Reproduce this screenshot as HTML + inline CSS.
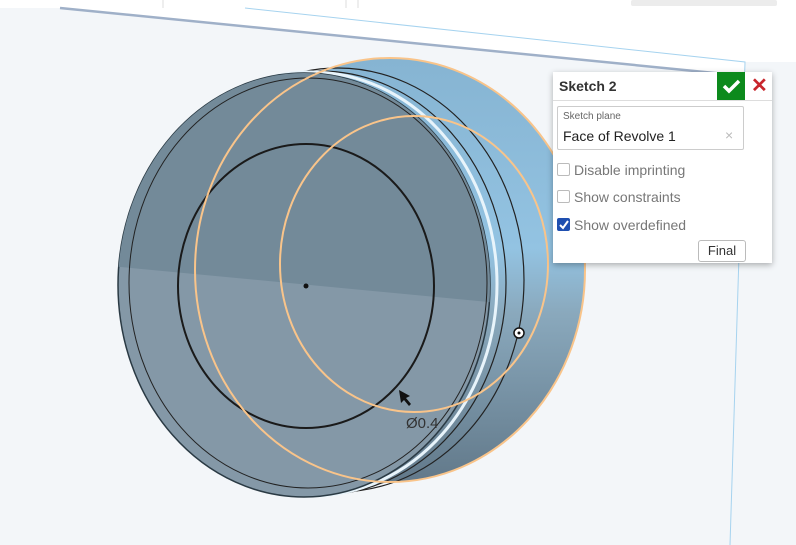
<!DOCTYPE html>
<html><head><style>
body{margin:0;width:796px;height:545px;overflow:hidden;background:#f3f6f9;font-family:"Liberation Sans",sans-serif;position:relative}
svg{position:absolute;left:0;top:0}
.panel{position:absolute;left:553px;top:72px;width:219px;height:191px;background:#fff;box-shadow:0 2px 6px rgba(0,0,0,.3)}
.hd{height:28px;border-bottom:1px solid #ddd;font-weight:bold;font-size:14px;color:#333;line-height:28px;padding-left:6px}
.ok{position:absolute;left:164px;top:0;width:28px;height:28px;background:#0c8a1c}
.x{position:absolute;left:198px;top:0;color:#c8252c;font-size:20px;font-weight:bold;line-height:28px}
.inp{position:absolute;left:4px;top:34px;width:185px;height:42px;border:1px solid #ccc;border-radius:2px}
.inp .l{position:absolute;left:5px;top:4px;font-size:10px;color:#666}
.inp .v{position:absolute;left:5px;top:21px;font-size:14px;color:#222}
.inp .c{position:absolute;left:167px;top:20px;font-size:14px;color:#bbb}
.cb{position:absolute;left:4px;font-size:14px;color:#777}
.cb i{display:inline-block;width:11px;height:11px;border:1px solid #bbb;border-radius:2px;vertical-align:-1px;margin-right:4px}
.fin{position:absolute;left:145px;top:168px;width:46px;height:20px;border:1px solid #bbb;border-radius:3px;font-size:13px;text-align:center;line-height:20px;color:#333}
</style></head><body>
<svg width="796" height="545">
<defs>
<linearGradient id="side" x1="0" y1="0" x2="0" y2="1">
<stop offset="0" stop-color="#86b4d2"/><stop offset=".45" stop-color="#93c3e2"/><stop offset=".6" stop-color="#8aa9bd"/><stop offset="1" stop-color="#62798a"/></linearGradient>
<clipPath id="fc"><ellipse cx="304" cy="285" rx="186" ry="212"/></clipPath>
</defs>
<rect x="0" y="0" width="796" height="8" fill="#fff"/>
<polygon points="60,8 796,8 796,62 745,62 745,76" fill="#fff"/>
<line x1="60" y1="8" x2="745" y2="76" stroke="#9fb0c8" stroke-width="2.5"/>
<polyline points="245,8 745,62 730,545" fill="none" stroke="#a6d3ef" stroke-width="1"/>
<rect x="631" y="0" width="146" height="6" rx="2" fill="#ececec"/>
<line x1="163" y1="0" x2="163" y2="8" stroke="#ddd"/><line x1="346" y1="0" x2="346" y2="8" stroke="#ddd"/><line x1="358" y1="0" x2="358" y2="8" stroke="#ddd"/>
<polygon points="304,73 390,58 390,482 304,497" fill="url(#side)"/>
<ellipse cx="390" cy="270" rx="195" ry="212" fill="url(#side)" stroke="#2a3a44" stroke-width="1"/>
<ellipse cx="338" cy="280" rx="186" ry="212" fill="none" stroke="#222" stroke-width="1.2"/>
<ellipse cx="320" cy="283" rx="186" ry="212" fill="none" stroke="#222" stroke-width="1.2"/>
<ellipse cx="311" cy="284" rx="186" ry="212" fill="none" stroke="#e8f4fb" stroke-width="3"/>
<ellipse cx="304" cy="285" rx="186" ry="212" fill="#8498a7" stroke="#2a3a44" stroke-width="1.5"/>
<polygon clip-path="url(#fc)" points="100,60 520,60 520,305 100,265" fill="#738a99"/>
<ellipse cx="308" cy="283" rx="179" ry="205" fill="none" stroke="#222" stroke-width="1"/>
<ellipse cx="306" cy="286" rx="128" ry="142" fill="none" stroke="#1a1a1a" stroke-width="2"/>
<circle cx="306" cy="286" r="2.5" fill="#111"/>
<ellipse cx="390" cy="270" rx="195" ry="212" fill="none" stroke="#f9c48a" stroke-width="2"/>
<ellipse cx="414" cy="264" rx="134" ry="148" fill="none" stroke="#f9c48a" stroke-width="2"/>
<circle cx="519" cy="333" r="5" fill="#fff" stroke="#111" stroke-width="1.5"/><circle cx="519" cy="333" r="1.5" fill="#111"/>
<path d="M399 390 L410 396 L406 398 L411 404 L409 406 L404 400 L401 403 Z" fill="#111"/>
<text x="406" y="428" font-size="15" fill="#333" font-family="Liberation Sans">Ø0.4</text>
<circle cx="757" cy="118" r="8" fill="none" stroke="#333" stroke-width="1.5"/><circle cx="757" cy="118" r="6" fill="none" stroke="#333" stroke-width="1"/>
<path d="M757 112v6h5" fill="none" stroke="#333" stroke-width="1.3"/>
<circle cx="762" cy="253" r="6" fill="#9a9a9a"/><text x="759" y="257" font-size="10" font-weight="bold" fill="#fff">?</text>
</svg>
<div class="panel">
<div class="hd">Sketch 2</div>
<div class="ok"><svg width="28" height="28"><path d="M7 14l5 5 10-10" fill="none" stroke="#fff" stroke-width="3.5"/></svg></div>
<div class="x">✕</div>
<div class="inp"><div class="l">Sketch plane</div><div class="v">Face of Revolve 1</div><div class="c">×</div></div>
<div class="cb" style="top:90px"><i></i>Disable imprinting</div>
<div class="cb" style="top:117px"><i></i>Show constraints</div>
<div class="cb" style="top:145px"><i style="background:#1f4fb0;border-color:#1f4fb0;position:relative"><svg width="11" height="11" style="position:absolute;left:0;top:0"><path d="M2 6l3 3 5-7" fill="none" stroke="#fff" stroke-width="2"/></svg></i>Show overdefined</div>
<div class="fin">Final</div>
</div>
</body></html>
